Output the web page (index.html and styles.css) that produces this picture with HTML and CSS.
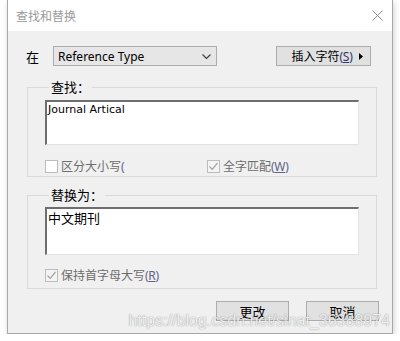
FILE: index.html
```html
<!DOCTYPE html>
<html lang="zh-CN">
<head>
    <meta charset="UTF-8">
    <meta name="viewport" content="width=device-width, initial-scale=1.0">
    <title>查找和替换</title>
    <link rel="stylesheet" href="styles.css">
</head>
<body>
    <div class="window">
        <div class="titlebar">
            <span class="title">查找和替换</span>
            <svg class="close" width="11" height="11" viewBox="0 0 11 11">
                <path d="M0.5 0.5 L10.5 10.5 M10.5 0.5 L0.5 10.5" stroke="#8a8a8a" stroke-width="1" fill="none"/>
            </svg>
        </div>

        <div class="content">
            <div class="row-top">
                <span class="in-label">在</span>
                <div class="select">
                    <span>Reference Type</span>
                    <svg class="chevron" width="9" height="5" viewBox="0 0 9 5">
                        <path d="M0.5 0.5 L4.5 4.5 L8.5 0.5" stroke="#444" stroke-width="1.2" fill="none"/>
                    </svg>
                </div>
                <div class="btn btn-insert">
                    <span>插入字符<span class="acc">(<u>S</u>)</span></span>
                    <svg class="tri" width="4" height="7" viewBox="0 0 4 7">
                        <path d="M0 0 L4 3.5 L0 7 Z" fill="#000"/>
                    </svg>
                </div>
            </div>

            <fieldset class="group group-find">
                <legend>查找：</legend>
                <div class="textbox tb-find">Journal Artical</div>
                <div class="checks">
                    <label class="check check-case"><span class="box"></span><span>区分大小写<span class="acc">(</span></span></label>
                    <label class="check"><span class="box checked"><svg width="11" height="11" viewBox="0 0 11 11"><path d="M1.5 5.5 L4.2 8.3 L9.5 2" stroke="#a3a3a3" stroke-width="1.2" fill="none"/></svg></span><span>全字匹配<span class="acc">(<u>W</u>)</span></span></label>
                </div>
            </fieldset>

            <fieldset class="group group-replace">
                <legend>替换为：</legend>
                <div class="textbox tb-replace">中文期刊</div>
                <div class="checks">
                    <label class="check"><span class="box checked"><svg width="11" height="11" viewBox="0 0 11 11"><path d="M1.5 5.5 L4.2 8.3 L9.5 2" stroke="#a3a3a3" stroke-width="1.2" fill="none"/></svg></span><span>保持首字母大写<span class="acc">(<u>R</u>)</span></span></label>
                </div>
            </fieldset>

            <div class="actions">
                <div class="btn btn-action">更改</div>
                <div class="btn btn-action">取消</div>
            </div>
        </div>

        <div class="watermark">https://blog.csdn.net/sinat_36388974</div>
    </div>
</body>
</html>
```

FILE: styles.css
```css
* {
    box-sizing: border-box;
}
body {
    margin: 0;
    background: #fff;
    font-family: "Noto Sans CJK SC", sans-serif;
    font-size: 12px;
    color: #000;
}
.window {
    position: relative;
    margin-left: 7px;
    width: 386px;
    height: 334px;
    background: #f0f0f0;
    border: 1px solid #a8a8a8;
    border-top: none;
    box-shadow: 1px 2px 6px rgba(0, 0, 0, 0.18);
}
.titlebar {
    height: 31px;
    background: #fff;
    display: flex;
    align-items: center;
    padding: 0 9px 0 8px;
}
.title {
    color: #9b9b9b;
    font-size: 12px;
}
.close {
    margin-left: auto;
}
.content {
    padding-top: 15px;
}
.row-top {
    display: flex;
    align-items: center;
    height: 20px;
    padding: 0 21px 0 18px;
}
.in-label {
    width: 27px;
    font-size: 13px;
}
.select {
    width: 164px;
    height: 20px;
    display: flex;
    align-items: center;
    padding: 0 5px 0 4px;
    background: #e6e6e6;
    border: 1px solid #acacac;
    font-family: "Noto Sans", "Noto Sans CJK SC", sans-serif;
    font-size: 12px;
}
.chevron {
    margin-left: auto;
}
.btn {
    height: 20px;
    display: flex;
    align-items: center;
    justify-content: center;
    background: #e1e1e1;
    border: 1px solid #adadad;
    font-size: 13px;
}
.btn-insert {
    margin-left: auto;
    width: 95px;
    gap: 7px;
    padding-left: 8px;
    font-size: 12px;
}
.acc {
    font-family: "Noto Sans", sans-serif;
    letter-spacing: -0.3px;
}
.btn-insert .acc {
    color: #2a3a6a;
}
.group {
    margin: 13px 15px 0 19px;
    padding: 5px 17px 3px 17px;
    border: 1px solid #dadada;
}
.group legend {
    margin-left: 4px;
    padding: 0 2px;
    font-size: 13px;
    line-height: 16px;
}
.group-replace {
    margin-top: 10px;
    padding-top: 4px;
    padding-bottom: 6px;
}
.textbox {
    background: #fff;
    border-top: 2px solid #6e6e6e;
    border-left: 2px solid #6e6e6e;
    border-right: 1px solid #e3e3e3;
    border-bottom: 1px solid #e3e3e3;
    padding: 1px 1px;
    line-height: 14px;
}
.tb-find {
    height: 45px;
    font-family: "DejaVu Sans", sans-serif;
    font-size: 11px;
}
.tb-replace {
    height: 48px;
    font-size: 13px;
    line-height: 15px;
}
.checks {
    display: flex;
    align-items: center;
    height: 14px;
    margin-top: 14px;
}
.group-replace .checks {
    margin-top: 13px;
}
.check {
    display: flex;
    align-items: center;
    gap: 3px;
    color: #6d6d6d;
    font-size: 12px;
}
.check .acc {
    color: #5c6585;
}
.check-case {
    width: 162px;
}
.box {
    width: 13px;
    height: 13px;
    border: 1px solid #bcbcbc;
    background: #fff;
    display: flex;
    align-items: center;
    justify-content: center;
}
.box.checked {
    background: #f4f4f4;
}
.actions {
    display: flex;
    justify-content: flex-end;
    gap: 17px;
    margin-top: 12px;
    padding-right: 13px;
}
.btn-action {
    width: 73px;
}
.watermark {
    position: absolute;
    right: 2px;
    bottom: 3px;
    font-family: "Liberation Sans", sans-serif;
    font-size: 16px;
    line-height: 18px;
    color: rgba(255, 255, 255, 0.85);
    text-shadow: 0 0 1px rgba(0, 0, 0, 0.35), 0 0 2px rgba(0, 0, 0, 0.15);
}
```
